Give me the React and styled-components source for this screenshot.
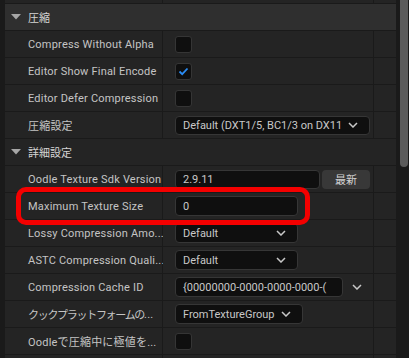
import React from 'react';
import styled, { createGlobalStyle } from 'styled-components';

const Global = createGlobalStyle`
  html, body { margin: 0; padding: 0; background: #1a1a1a; }
  body { font-family: Roboto, "Noto Sans CJK JP", sans-serif; }
`;

const Frame = styled.div`
  display: flex;
  width: 409px;
  height: 358px;
  overflow: hidden;
  background: #1a1a1a;
`;

const Panel = styled.div`
  width: 396px;
  display: flex;
  flex-direction: column;
`;

const ScrollTrack = styled.div`
  width: 13px;
  padding: 0 1px 0 4px;
  box-sizing: border-box;
`;

const Thumb = styled.div`
  width: 8px;
  height: 167px;
  background: #5b5b5b;
  border-radius: 0 0 4px 4px;
`;

const Row = styled.div`
  position: relative;
  flex: none;
  display: grid;
  grid-template-columns: 157px 210px 22px;
  column-gap: 1px;
  margin-left: 5px;
  height: ${p => p.$h || 26}px;
  background: #1a1a1a;
  border-bottom: 1px solid #1a1a1a;
`;

const Cell = styled.div`
  background: #242424;
  display: flex;
  align-items: center;
  min-width: 0;
`;

const NameCell = styled(Cell)`
  padding-left: 23px;
  color: #c4c4c4;
  font-size: 11px;
  letter-spacing: 0.2px;
  white-space: nowrap;
`;

const Kana = styled.span`
  letter-spacing: -1.3px;
`;

const ValueCell = styled(Cell)`
  padding-left: 12px;
  gap: ${p => p.$gap || 2}px;
`;

const Header = styled.div`
  flex: none;
  display: flex;
  align-items: center;
  gap: 7px;
  margin-left: 5px;
  height: 26px;
  padding-left: 6px;
  background: ${p => (p.$top ? '#2f2f2f' : '#242424')};
  border-bottom: 1px solid #1a1a1a;
  color: #d4d4d4;
  font-size: 11px;
`;

const Checkbox = styled.div`
  width: 17px;
  height: 17px;
  box-sizing: border-box;
  background: #0f0f0f;
  border: 1px solid #353535;
  border-radius: 3px;
  display: flex;
  align-items: center;
  justify-content: center;
`;

const Field = styled.div`
  width: ${p => p.$w}px;
  height: ${p => p.$h || 20}px;
  box-sizing: border-box;
  background: #0f0f0f;
  border: 1px solid #363636;
  border-radius: 4px;
  padding: 0 ${p => (p.$combo ? 11 : 7)}px 0 7px;
  display: flex;
  align-items: center;
  gap: 5px;
  color: #c8c8c8;
  font-size: 11px;
  letter-spacing: 0;
  white-space: nowrap;
  overflow: hidden;
`;

const FieldText = styled.span`
  flex: 1;
  min-width: 0;
  overflow: hidden;
`;

const Button = styled.div`
  width: 48px;
  height: 19px;
  background: #383838;
  border-radius: 4px;
  display: flex;
  align-items: center;
  justify-content: center;
  color: #d0d0d0;
  font-size: 11px;
`;

const Highlight = styled.div`
  position: absolute;
  left: 11px;
  top: -6px;
  width: 294px;
  height: 38px;
  box-sizing: border-box;
  border: 5px solid #f40000;
  border-radius: 10px;
  z-index: 5;
  pointer-events: none;
`;

const Chevron = () => (
  <svg width="10" height="6" viewBox="0 0 10 6" style={{ flex: 'none' }}>
    <polyline points="1,1 5,5 9,1" fill="none" stroke="#c8c8c8" strokeWidth="1.5" />
  </svg>
);

const Triangle = () => (
  <svg width="10" height="6" viewBox="0 0 10 6" style={{ flex: 'none' }}>
    <polygon points="0,0 10,0 5,5.5" fill="#a6a6a6" />
  </svg>
);

const Check = () => (
  <svg width="11" height="9" viewBox="0 0 11 9">
    <polyline points="1.5,4.5 4.2,7.2 9.5,1.5" fill="none" stroke="#2a8cf5" strokeWidth="1.8" />
  </svg>
);

const Prop = ({ label, children, gap, extra }) => (
  <Row>
    {extra}
    <NameCell>{label}</NameCell>
    <ValueCell $gap={gap}>{children}</ValueCell>
    <Cell />
  </Row>
);

const Combo = ({ w, h, children }) => (
  <Field $w={w} $h={h} $combo>
    <FieldText>{children}</FieldText>
    <Chevron />
  </Field>
);

export default function App() {
  return (
    <>
      <Global />
      <Frame>
        <Panel>
          <Row $h={3}>
            <Cell />
            <Cell />
            <Cell />
          </Row>
          <Header $top>
            <Triangle />
            <span>圧縮</span>
          </Header>
          <Prop label="Compress Without Alpha">
            <Checkbox />
          </Prop>
          <Prop label="Editor Show Final Encode">
            <Checkbox>
              <Check />
            </Checkbox>
          </Prop>
          <Prop label="Editor Defer Compression">
            <Checkbox />
          </Prop>
          <Prop label="圧縮設定">
            <Combo w={195} h={19}>Default (DXT1/5, BC1/3 on DX11</Combo>
          </Prop>
          <Header>
            <Triangle />
            <span>詳細設定</span>
          </Header>
          <Prop label="Oodle Texture Sdk Version">
            <Field $w={145} $h={19}>2.9.11</Field>
            <Button>最新</Button>
          </Prop>
          <Prop label="Maximum Texture Size" extra={<Highlight />}>
            <Field $w={123}>0</Field>
          </Prop>
          <Prop label="Lossy Compression Amo...">
            <Combo w={123}>Default</Combo>
          </Prop>
          <Prop label="ASTC Compression Quali...">
            <Combo w={123}>Default</Combo>
          </Prop>
          <Prop label="Compression Cache ID" gap={9}>
            <Field $w={168}>{'{00000000-0000-0000-0000-('}</Field>
            <Chevron />
          </Prop>
          <Prop label={<><Kana>クックプラットフォームの</Kana>...</>}>
            <Combo w={128}>FromTextureGroup</Combo>
          </Prop>
          <Prop label="Oodleで圧縮中に極値を...">
            <Checkbox />
          </Prop>
          <Row $h={3}>
            <Cell />
            <Cell />
            <Cell />
          </Row>
        </Panel>
        <ScrollTrack>
          <Thumb />
        </ScrollTrack>
      </Frame>
    </>
  );
}
